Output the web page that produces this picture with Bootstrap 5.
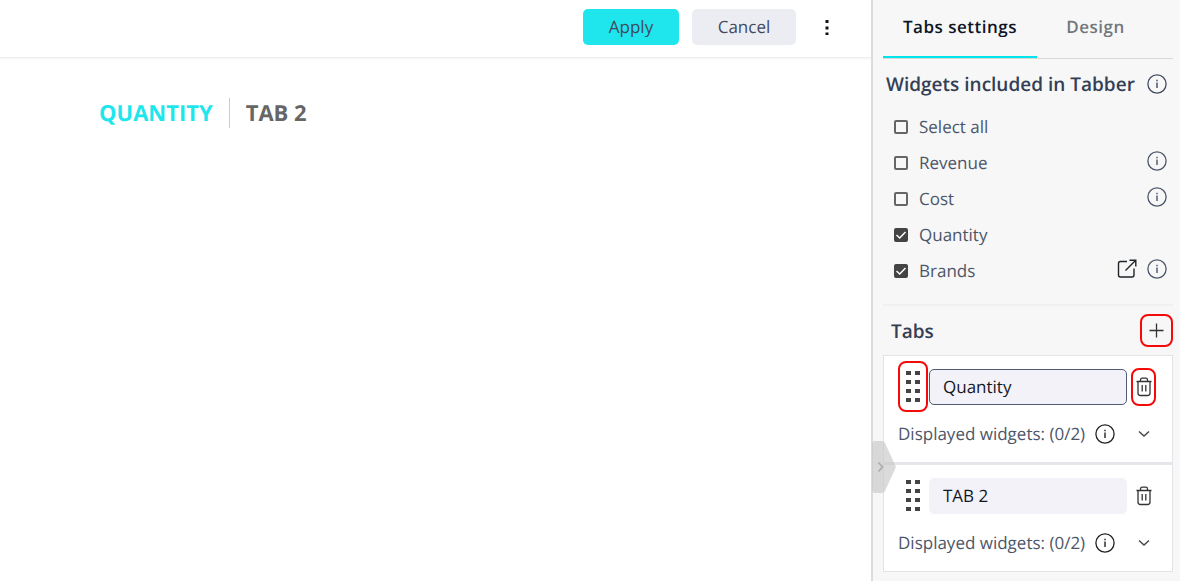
<!DOCTYPE html>
<html lang="en">
<head>
<meta charset="utf-8">
<meta name="viewport" content="width=device-width, initial-scale=1">
<title>Tabber settings</title>
<link href="https://cdn.jsdelivr.net/npm/bootstrap@5.3.0/dist/css/bootstrap.min.css" rel="stylesheet">
<style>
  body { font-family: "Open Sans", sans-serif; font-size: 17px; line-height: 24px; color: #3f4a5f; background: #fff; text-rendering: geometricPrecision; }
  button, input { text-rendering: inherit; }
  svg { display: block; fill: none; stroke: currentColor; }
  .icon-btn { padding: 0; border: 0; background: none; color: inherit; display: flex; align-items: center; justify-content: center; flex: none; }

  .topbar { height: 58px; padding: 0 32px 4px 0; border-bottom: 1px solid #efefef; box-shadow: 0 1px 2px #f3f3f3; }
  .topbar .btn { height: 36px; padding: 0; border: 0; border-radius: 5px; font-size: 17px; color: #3f4a5f; }
  .topbar .btn-apply { width: 96px; background: #1fe6ec; }
  .topbar .btn-cancel { width: 104px; margin: 0 19px 0 13px; background: #ecedf2; }
  .kebab { width: 24px; height: 32px; color: #000; }

  .preview-tabs { padding: 40px 99px; font-size: 22px; line-height: 30px; font-weight: 700; }
  .preview-tabs a { color: #666; text-decoration: none; }
  .preview-tabs a.active { color: #1fe6ec; }
  .preview-tabs a + a { border-left: 1px solid #ccc; padding-left: 16px; margin-left: 16px; }

  .panel { width: 309px; padding: 0 7px 9px 10px; background: #f7f7f7; border-left: 2px solid #dcdcdc; }
  .panel-tabs { height: 59px; border-bottom: 1px solid #d8d8d8; }
  .panel-tabs button { height: 58px; padding: 0 0 2px; border: 0; border-bottom: 2px solid transparent; background: none; color: #72777c; font-weight: 600; letter-spacing: .5px; }
  .panel-tabs button.active { width: 154px; color: #0d1526; border-color: #00e5ea; }
  .panel-tabs button:last-child { width: 117px; }
  .panel h2 { margin: 0; font-size: 19px; line-height: 28px; font-weight: 600; color: #343e55; white-space: nowrap; }
  .widgets-head { height: 50px; padding: 0 6px 0 3px; }
  .widget-row { height: 36px; padding: 0 6px 0 11px; color: #4c5669; }
  .widget-row .tools { padding-bottom: 4px; }
  .tick { appearance: none; width: 14px; height: 14px; margin: 0 11px 0 0; border: 2px solid #666; border-radius: 2px; background: none center / 14px 14px no-repeat; background-origin: border-box; flex: none; }
  .tick:checked { border-color: #444; background-color: #444; background-image: url("data:image/svg+xml,%3Csvg xmlns='http://www.w3.org/2000/svg' viewBox='0 0 14 14'%3E%3Cpath d='M2.5 7 5.7 10 11.5 4' fill='none' stroke='white' stroke-width='1.5'/%3E%3C/svg%3E"); }
  .tabs-head { height: 51px; margin-top: 15px; padding-left: 8px; border-top: 2px solid #f0f0f1; }
  .add { width: 33px; height: 33px; }
  .marked { border: 2px solid #f50a0a; border-radius: 8px; }

  .tab-list { background: #fff; border: 1px solid #e1e4e9; }
  .tab-item { padding: 5px 16px 10px 14px; }
  .tab-item + .tab-item { border-top: 3px solid #e5e5ea; }
  .tab-row { height: 51px; margin-bottom: 4px; }
  .handle { width: 30px; height: 51px; margin-right: 1px; color: #444; }
  .name { flex: 1; min-width: 0; height: 36px; margin-right: 4px; padding: 0 13px; border: 1px solid #f3f2f8; border-radius: 5px; background: #f3f2f8; color: #14181f; outline: 0; }
  .name.current { border-color: #505c75; }
  .trash { width: 25px; height: 38px; color: #333; }
  .shown { height: 36px; color: #4c5669; }
  .shown .arrow { width: 25px; height: 24px; margin-left: auto; color: #444; }
  .shown .dark { margin-left: 10px; color: #222; }

  .collapse-tab { left: -1px; top: 441px; width: 24px; height: 52px; color: #aaa; }
</style>
</head>
<body>
<svg width="0" height="0" class="position-absolute" aria-hidden="true">
  <symbol id="info" viewBox="0 0 20 20"><circle cx="10" cy="10" r="9.1" stroke-width="1.3"/><path d="M10 8.5V14M10 5.8V7.2" stroke-width="1.4"/></symbol>
  <symbol id="dots" viewBox="0 0 14 32"><path d="M2.500 0V32M11.500 0V32" stroke-width="5" stroke-dasharray="4 5"/></symbol>
  <symbol id="bin" viewBox="0 0 16 20"><path d="M.5 4.500H15.500M4.500 4.500V3Q4.500 1.200 6.300 1.200H9.700Q11.500 1.200 11.500 3V4.500M2 4.500V16Q2 18.500 4.500 18.500H11.500Q14 18.500 14 16V4.500M6.200 8V14.500M9.800 8V14.500" stroke-width="1.3"/></symbol>
  <symbol id="down" viewBox="0 0 12 8"><path d="M1 1.500 6 6 11 1.500" stroke-width="1.4"/></symbol>
</svg>

<div class="d-flex min-vh-100">
  <main class="flex-grow-1">
    <header class="topbar d-flex align-items-center justify-content-end">
      <button type="button" class="btn btn-apply">Apply</button>
      <button type="button" class="btn btn-cancel">Cancel</button>
      <button type="button" class="icon-btn kebab" aria-label="More"><svg width="4" height="16" viewBox="0 0 4 16"><path d="M.5 1h3v3h-3zM.5 7.500h3v3h-3zM.5 13.500h3v3h-3z" fill="#111" stroke="none"/></svg></button>
    </header>
    <nav class="preview-tabs d-flex">
      <a href="#" class="active">QUANTITY</a>
      <a href="#">TAB 2</a>
    </nav>
  </main>

  <aside class="panel position-relative flex-shrink-0">
    <div class="panel-tabs d-flex">
      <button type="button" class="active">Tabs settings</button>
      <button type="button">Design</button>
    </div>

    <div class="widgets-head d-flex align-items-center justify-content-between">
      <h2>Widgets included in Tabber</h2>
      <button type="button" class="icon-btn" aria-label="About widgets"><svg width="20" height="20"><use href="#info"/></svg></button>
    </div>
    <div class="widget-row d-flex align-items-center">
      <input class="tick" type="checkbox" id="w0"><label for="w0">Select all</label>
    </div>
    <div class="widget-row d-flex align-items-center">
      <input class="tick" type="checkbox" id="w1"><label for="w1">Revenue</label>
      <div class="tools d-flex ms-auto"><button type="button" class="icon-btn" aria-label="About Revenue"><svg width="20" height="20"><use href="#info"/></svg></button></div>
    </div>
    <div class="widget-row d-flex align-items-center">
      <input class="tick" type="checkbox" id="w2"><label for="w2">Cost</label>
      <div class="tools d-flex ms-auto"><button type="button" class="icon-btn" aria-label="About Cost"><svg width="20" height="20"><use href="#info"/></svg></button></div>
    </div>
    <div class="widget-row d-flex align-items-center">
      <input class="tick" type="checkbox" id="w3" checked><label for="w3">Quantity</label>
    </div>
    <div class="widget-row d-flex align-items-center">
      <input class="tick" type="checkbox" id="w4" checked><label for="w4">Brands</label>
      <div class="tools d-flex ms-auto">
        <a href="#" class="icon-btn text-dark me-2" aria-label="Open Brands"><svg width="24" height="20" viewBox="0 0 24 20"><path d="M12 2.500H5.500Q3.500 2.500 3.500 4.500V16Q3.500 18 5.500 18H17Q19 18 19 16V9.500M10.500 11.500 20.500 1.500M14.500 1.200H20.800V7.500" stroke-width="1.4"/></svg></a>
        <button type="button" class="icon-btn" aria-label="About Brands"><svg width="20" height="20"><use href="#info"/></svg></button>
      </div>
    </div>

    <div class="tabs-head d-flex align-items-center justify-content-between">
      <h2>Tabs</h2>
      <button type="button" class="icon-btn add marked" aria-label="Add tab"><svg width="15" height="15" viewBox="0 0 15 15"><path d="M7.500 0.500V14.500M.5 7.500H14.500" stroke="#333" stroke-width="1.3"/></svg></button>
    </div>

    <div class="tab-list">
      <section class="tab-item">
        <div class="tab-row d-flex align-items-center">
          <button type="button" class="icon-btn handle marked" aria-label="Move tab"><svg width="14" height="32"><use href="#dots"/></svg></button>
          <input type="text" class="name current" value="Quantity" aria-label="Tab name">
          <button type="button" class="icon-btn trash marked" aria-label="Delete tab"><svg width="16" height="20"><use href="#bin"/></svg></button>
        </div>
        <div class="shown d-flex align-items-center">
          <span>Displayed widgets: (0/2)</span>
          <button type="button" class="icon-btn dark" aria-label="About displayed widgets"><svg width="20" height="20"><use href="#info"/></svg></button>
          <button type="button" class="icon-btn arrow" aria-label="Expand"><svg width="12" height="8"><use href="#down"/></svg></button>
        </div>
      </section>
      <section class="tab-item">
        <div class="tab-row d-flex align-items-center">
          <button type="button" class="icon-btn handle" aria-label="Move tab"><svg width="14" height="32"><use href="#dots"/></svg></button>
          <input type="text" class="name" value="TAB 2" aria-label="Tab name">
          <button type="button" class="icon-btn trash" aria-label="Delete tab"><svg width="16" height="20"><use href="#bin"/></svg></button>
        </div>
        <div class="shown d-flex align-items-center">
          <span>Displayed widgets: (0/2)</span>
          <button type="button" class="icon-btn dark" aria-label="About displayed widgets"><svg width="20" height="20"><use href="#info"/></svg></button>
          <button type="button" class="icon-btn arrow" aria-label="Expand"><svg width="12" height="8"><use href="#down"/></svg></button>
        </div>
      </section>
    </div>

    <button type="button" class="icon-btn collapse-tab position-absolute" aria-label="Collapse panel"><svg width="24" height="52" viewBox="0 0 24 52"><path d="M0 3Q0 0 3 0H10Q12 0 13 2L24 26 13 50Q12 52 10 52H3Q0 52 0 49Z" fill="#c8c8c8" fill-opacity=".65" stroke="none"/><path d="M6.500 21.500 10.500 26 6.500 30.500" stroke-width="1.6"/></svg></button>
  </aside>
</div>
<script src="https://cdn.jsdelivr.net/npm/bootstrap@5.3.0/dist/js/bootstrap.bundle.min.js"></script>
</body>
</html>
